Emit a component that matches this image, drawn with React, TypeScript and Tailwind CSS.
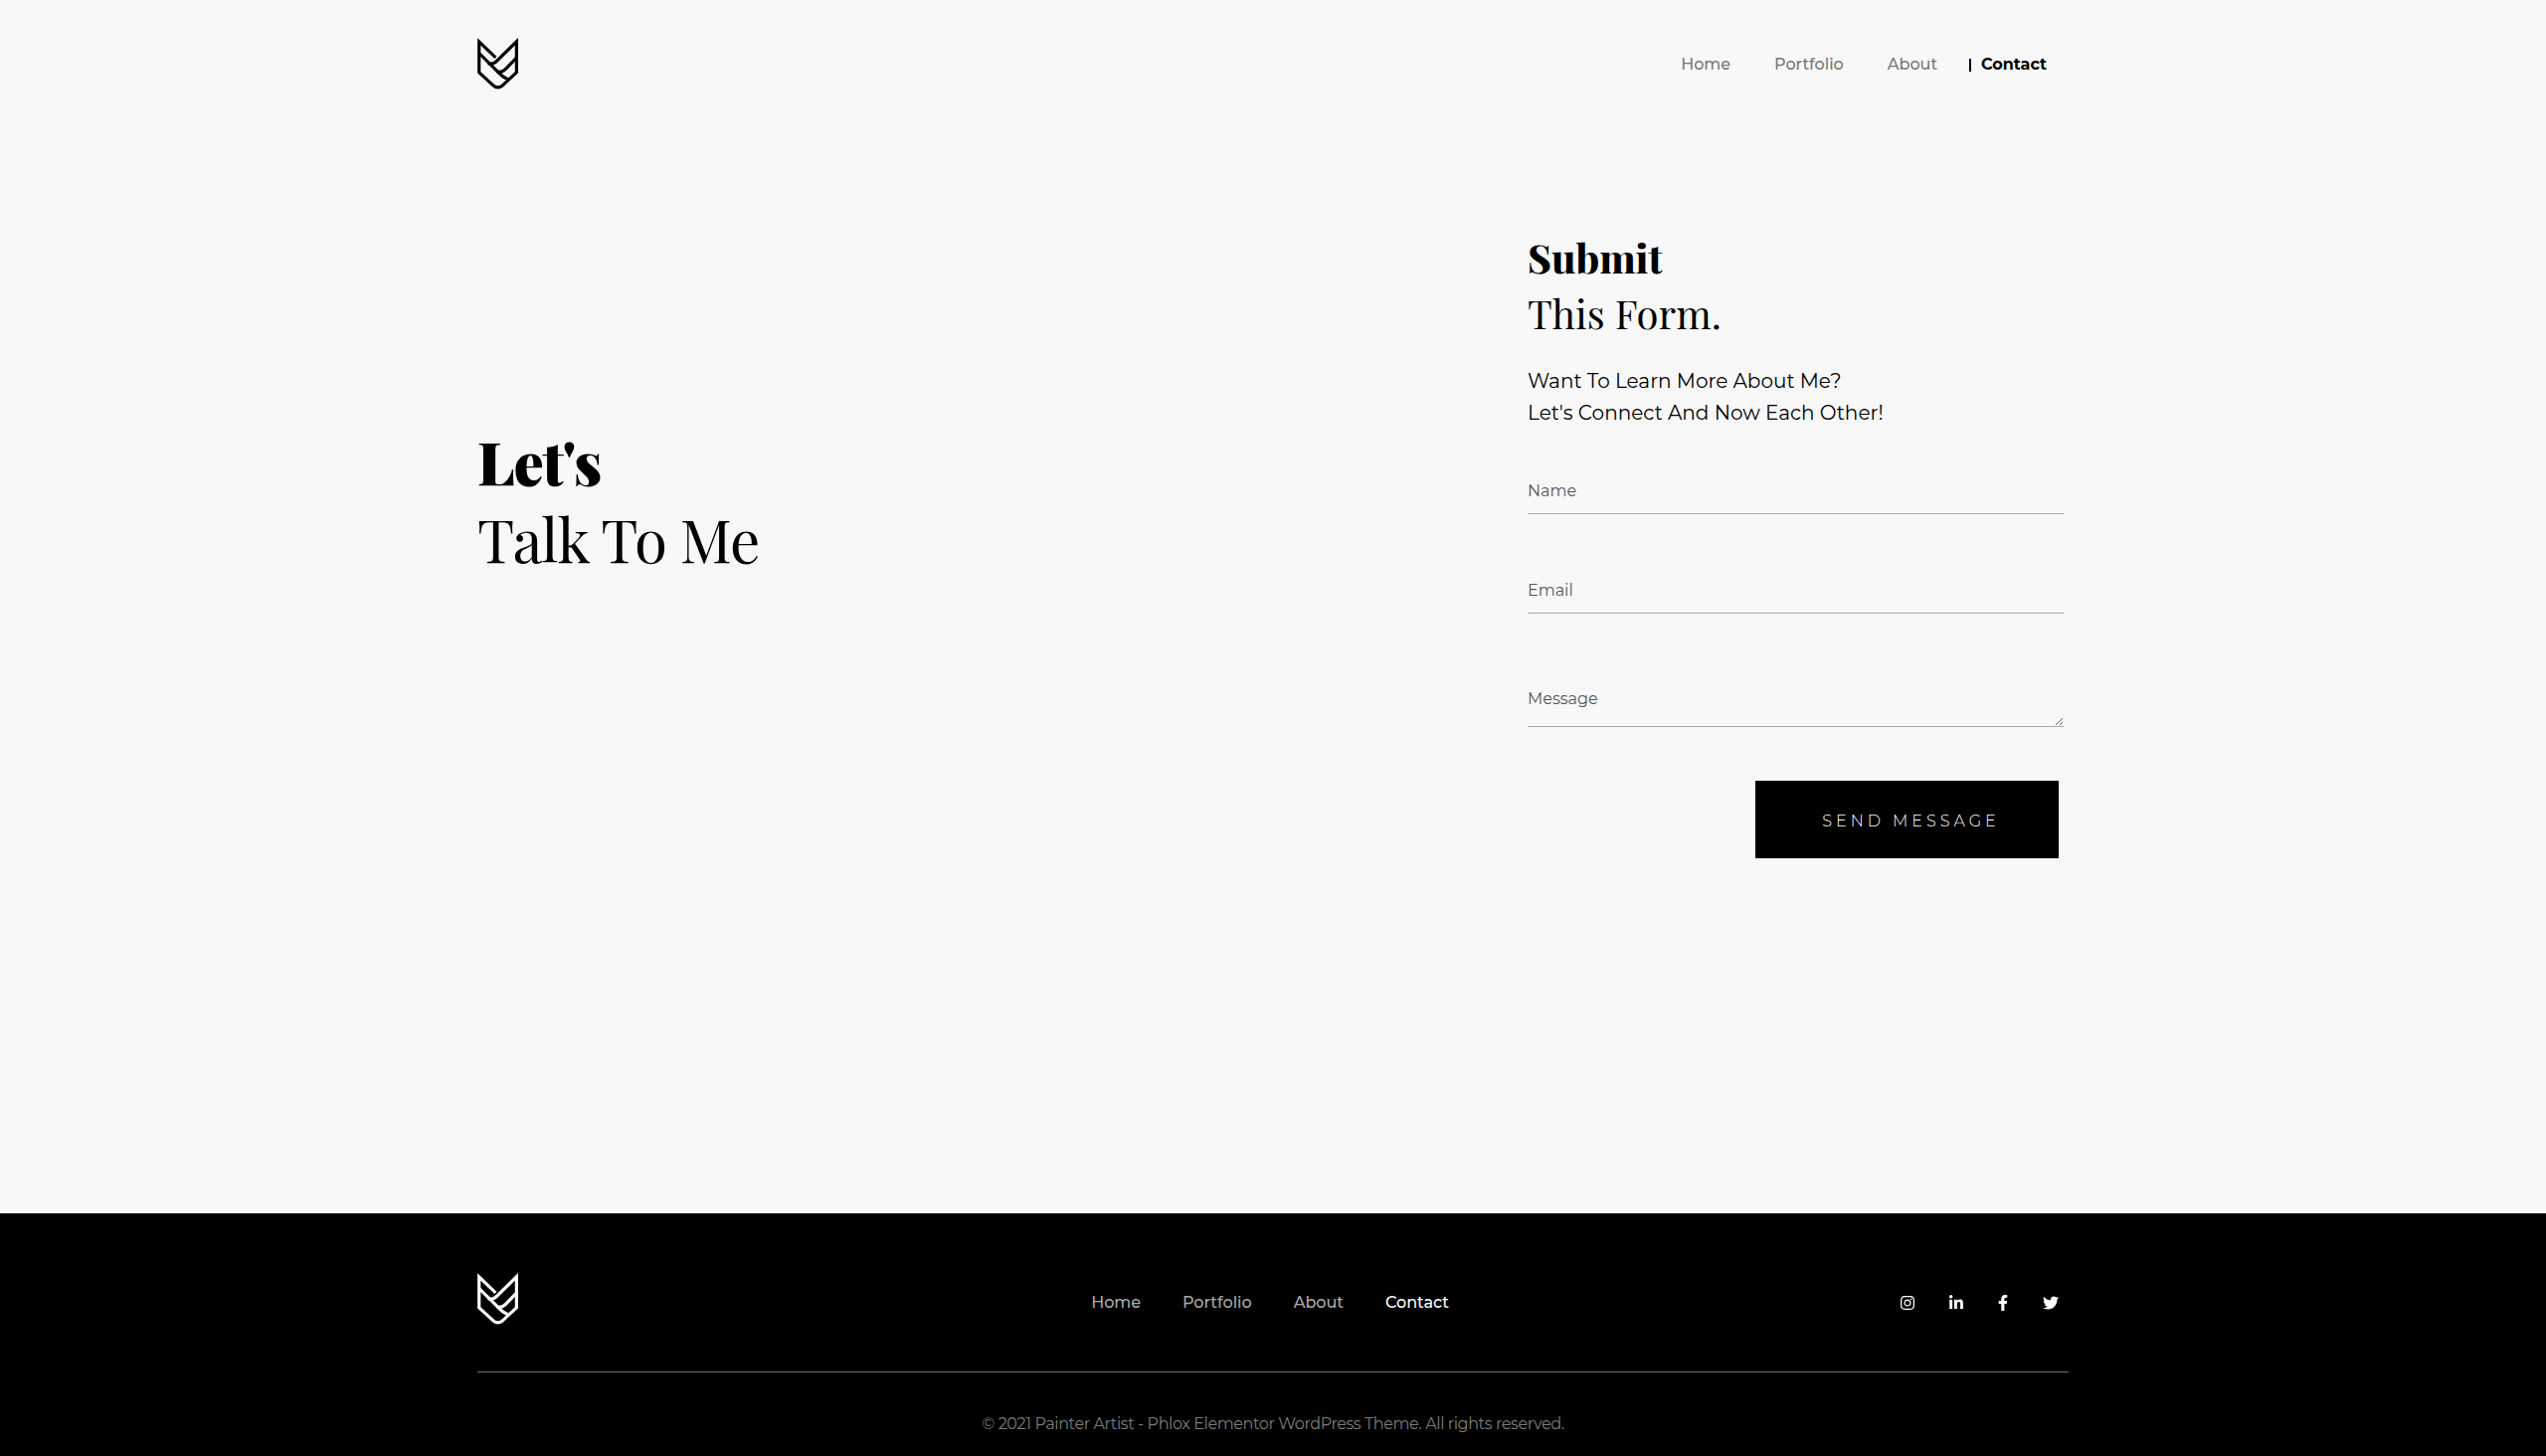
import { FaFacebookF, FaInstagram, FaLinkedinIn, FaTwitter } from "react-icons/fa";

const NAV_LINKS = ["Home", "Portfolio", "About"];

const SOCIAL_LINKS = [
  { label: "Instagram", Icon: FaInstagram, size: "w-3.5" },
  { label: "LinkedIn", Icon: FaLinkedinIn, size: "w-3.5" },
  { label: "Facebook", Icon: FaFacebookF, size: "w-2.5" },
  { label: "Twitter", Icon: FaTwitter, size: "w-4" },
];

const FIELD =
  "block w-full border-b border-[#a9a9a9] bg-transparent text-[#555] placeholder:text-[#555] placeholder:opacity-100 outline-none";

function Logo() {
  return (
    <a href="#" aria-label="Painter Artist" className="block">
      <svg
        viewBox="0 0 40 51"
        className="block h-[52px] w-[41px]"
        fill="none"
        stroke="currentColor"
        strokeWidth="3.1"
      >
        <path d="M17.9 19.4 L1.6 3.8 V34.2 L15.5 47 Q20 51 24.7 47 L38.5 34.2 V3.8 L19.5 22.5 Q15 27.2 10.5 25" />
        <path d="M1.6 15.2 L21.5 35 Q26 39.8 29.8 40.4" />
        <path d="M38.5 19.7 L28.3 30.2 Q24 34.8 19.3 33.4" />
      </svg>
    </a>
  );
}

function Header() {
  return (
    <header className="mx-auto flex w-full max-w-[1600px] items-center justify-between pt-[38px]">
      <Logo />
      <nav className="flex items-center pr-[22px] pt-0.5 text-base font-medium text-[#777]">
        <div className="flex gap-11">
          {NAV_LINKS.map((link) => (
            <a key={link} href="#" className="hover:text-black">
              {link}
            </a>
          ))}
        </div>
        <a
          href="#"
          aria-current="page"
          className="ml-8 flex items-center gap-2.5 font-bold text-black before:h-[13px] before:w-0.5 before:bg-black"
        >
          Contact
        </a>
      </nav>
    </header>
  );
}

function ContactForm() {
  return (
    <form className="pr-[5px] text-base" onSubmit={(e) => e.preventDefault()}>
      <input type="text" aria-label="Name" placeholder="Name" className={`${FIELD} h-12 pt-0.5`} />
      <input
        type="email"
        aria-label="Email"
        placeholder="Email"
        className={`${FIELD} mt-[52px] h-12 pt-0.5`}
      />
      <textarea
        aria-label="Message"
        placeholder="Message"
        className={`${FIELD} mt-[60px] h-[54px] resize-y pt-3.5`}
      />

      <div className="flex justify-end pr-[5px] pt-[54px]">
        <button
          type="submit"
          className="h-[78px] w-[305px] bg-black pl-2 pt-1 text-base font-light tracking-[4px] text-white"
        >
          SEND MESSAGE
        </button>
      </div>
    </form>
  );
}

function Footer() {
  return (
    <footer className="bg-black text-white">
      <div className="mx-auto max-w-[1600px]">
        <div className="grid grid-cols-3 items-center border-b border-[#707070] pb-[47px] pt-[60px]">
          <Logo />
          <nav className="flex justify-center gap-[42px] pr-1.5 pt-2 text-base font-medium text-[#aaa]">
            {NAV_LINKS.map((link) => (
              <a key={link} href="#" className="hover:text-white">
                {link}
              </a>
            ))}
            <a href="#" aria-current="page" className="text-white">
              Contact
            </a>
          </nav>
          <div className="flex justify-end gap-[35px] pr-2.5 pt-2">
            {SOCIAL_LINKS.map(({ label, Icon, size }) => (
              <a key={label} href="#" aria-label={label}>
                <Icon className={`${size} h-4`} />
              </a>
            ))}
          </div>
        </div>
        <p className="pb-5 pt-10 text-center text-base tracking-tight text-[#7c7c7c]">
          © 2021 Painter Artist - Phlox Elementor WordPress Theme. All rights reserved.
        </p>
      </div>
    </footer>
  );
}

export default function App() {
  return (
    <div className="flex min-h-screen flex-col bg-[#f8f8f8] font-['Montserrat','Inter',sans-serif] text-black">
      <Header />
      <main className="mx-auto flex w-full max-w-[1600px] grow pt-[141px]">
        <h1 className="w-[66%] pt-[193px] font-['Playfair_Display','Liberation_Serif',serif] text-[60px] leading-[78px] tracking-[-1px]">
          <strong className="block font-black">Let's</strong>
          Talk To Me
        </h1>
        <section className="w-[34%]">
          <h2 className="font-['Playfair_Display','Liberation_Serif',serif] text-[40px] leading-[56px]">
            <strong className="block font-extrabold">Submit</strong>
            This Form.
          </h2>
          <p className="mb-[38px] mt-6 text-xl leading-8">
            Want To Learn More About Me?
            <br />
            Let's Connect And Now Each Other!
          </p>
          <ContactForm />
        </section>
      </main>
      <Footer />
    </div>
  );
}
